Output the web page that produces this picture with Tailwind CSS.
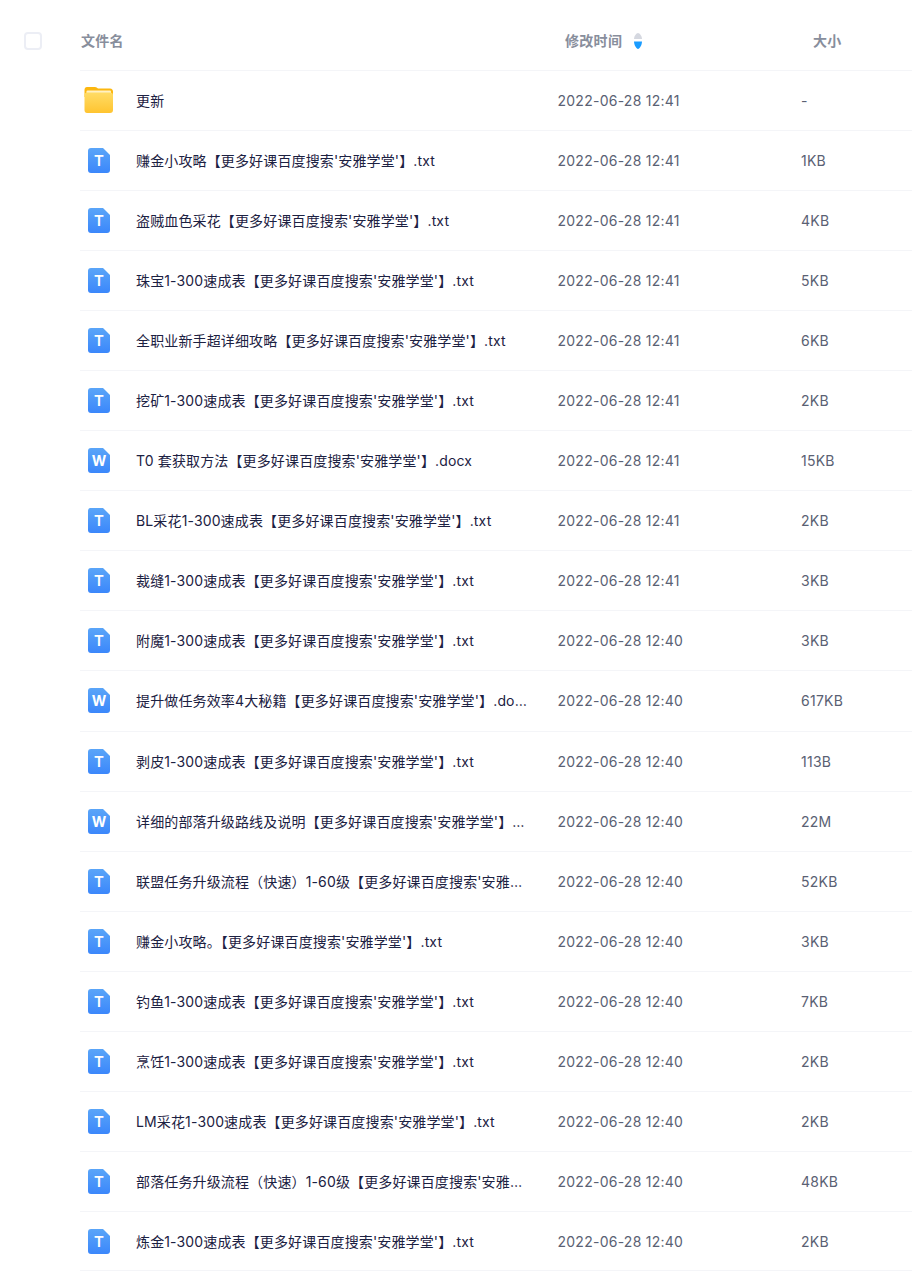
<!DOCTYPE html>
<html lang="zh">
  <head>
    <meta charset="UTF-8" />
    <title>文件列表</title>
    <script src="https://cdn.jsdelivr.net/npm/@tailwindcss/browser@4"></script>
  </head>
  <body class="bg-white font-['Inter','Noto_Sans_CJK_SC',sans-serif] text-[14px] text-[#1c2142] overflow-hidden">
    <!-- Header -->
    <div class="flex items-center h-[69.5px] pt-3">
      <div class="w-[18px] h-[18px] ml-6 border-2 border-[#eceef5] rounded-[4px]"></div>
      <div class="ml-[39px] w-[484px] font-semibold tracking-[0.3px] text-[#888e9c]">文件名</div>
      <div class="w-[248px] flex items-center font-semibold tracking-[0.3px] text-[#888e9c]">
        修改时间
        <svg class="ml-[11px]" width="10" height="18" viewBox="0 0 10 18">
          <path d="M5 1 C6.500 1 9 4 9 7 L1 7 C1 4 3.500 1 5 1Z" fill="#d5d8e0" />
          <path d="M5 17 C6.500 17 9 13 9 9.500 L1 9.500 C1 13 3.500 17 5 17Z" fill="#1a9cff" />
        </svg>
      </div>
      <div class="font-semibold tracking-[0.3px] text-[#888e9c]">大小</div>
    </div>

    <!-- File list -->
    <div class="ml-20 mr-[3px]">
      <div class="flex items-center h-[60.1px] border-t border-[#f4f5f8]">
        <div class="w-14 pl-1 shrink-0">
          <svg width="30" height="26" viewBox="0 0 30 26">
            <defs>
              <linearGradient id="body" x1="0" y1="0" x2="0" y2="1"><stop offset="0" stop-color="#ffdc66" /><stop offset="1" stop-color="#ffc430" /></linearGradient>
              <linearGradient id="doc" x1="0" y1="0" x2="0" y2="1"><stop offset="0" stop-color="#5aa5f8" /><stop offset="1" stop-color="#3b87fb" /></linearGradient>
            </defs>
            <path d="M3 0 H11 C12.500 0 13 1 14 1.500 H26 C28 1.500 29 3 29 4.500 V10 H0.500 V3 C0.500 1 1.500 0 3 0Z" fill="#fcb70f" />
            <rect x="2.500" y="3.500" width="24.500" height="4" rx="1" fill="#fff1c4" />
            <path d="M3 5.500 H26 C28 5.500 29 6.500 29 8 V23 C29 25 28 26 26 26 H3 C1.500 26 0.500 25 0.500 23 V8 C0.500 6.500 1.500 5.500 3 5.500Z" fill="url(#body)" />
          </svg>
        </div>
        <div class="w-[421.500px] pr-[30px] truncate tracking-[0.14px]">更新</div>
        <div class="w-[243.500px] tracking-[0.25px] text-[#5a6173]">2022-06-28 12:41</div>
        <div class="tracking-[0.25px] text-[#5a6173]">-</div>
      </div>

      <div class="flex items-center h-[60.1px] border-t border-[#f4f5f8]">
        <div class="w-14 pl-2 shrink-0"><svg width="22" height="25" viewBox="0 0 22 25"><path d="M3 0 H15 L22 7 V22 C22 24 21 25 19 25 H3 C1 25 0 24 0 22 V3 C0 1 1 0 3 0Z" fill="url(#doc)" /><text x="11" y="18" text-anchor="middle" font-size="15" font-weight="600" fill="#fff">T</text></svg></div>
        <div class="w-[421.500px] pr-[30px] truncate tracking-[0.14px]">赚金小攻略【更多好课百度搜索'安雅学堂'】.txt</div>
        <div class="w-[243.500px] tracking-[0.25px] text-[#5a6173]">2022-06-28 12:41</div>
        <div class="tracking-[0.25px] text-[#5a6173]">1KB</div>
      </div>
      <div class="flex items-center h-[60.1px] border-t border-[#f4f5f8]">
        <div class="w-14 pl-2 shrink-0"><svg width="22" height="25" viewBox="0 0 22 25"><path d="M3 0 H15 L22 7 V22 C22 24 21 25 19 25 H3 C1 25 0 24 0 22 V3 C0 1 1 0 3 0Z" fill="url(#doc)" /><text x="11" y="18" text-anchor="middle" font-size="15" font-weight="600" fill="#fff">T</text></svg></div>
        <div class="w-[421.500px] pr-[30px] truncate tracking-[0.14px]">盗贼血色采花【更多好课百度搜索'安雅学堂'】.txt</div>
        <div class="w-[243.500px] tracking-[0.25px] text-[#5a6173]">2022-06-28 12:41</div>
        <div class="tracking-[0.25px] text-[#5a6173]">4KB</div>
      </div>
      <div class="flex items-center h-[60.1px] border-t border-[#f4f5f8]">
        <div class="w-14 pl-2 shrink-0"><svg width="22" height="25" viewBox="0 0 22 25"><path d="M3 0 H15 L22 7 V22 C22 24 21 25 19 25 H3 C1 25 0 24 0 22 V3 C0 1 1 0 3 0Z" fill="url(#doc)" /><text x="11" y="18" text-anchor="middle" font-size="15" font-weight="600" fill="#fff">T</text></svg></div>
        <div class="w-[421.500px] pr-[30px] truncate tracking-[0.14px]">珠宝1-300速成表【更多好课百度搜索'安雅学堂'】.txt</div>
        <div class="w-[243.500px] tracking-[0.25px] text-[#5a6173]">2022-06-28 12:41</div>
        <div class="tracking-[0.25px] text-[#5a6173]">5KB</div>
      </div>
      <div class="flex items-center h-[60.1px] border-t border-[#f4f5f8]">
        <div class="w-14 pl-2 shrink-0"><svg width="22" height="25" viewBox="0 0 22 25"><path d="M3 0 H15 L22 7 V22 C22 24 21 25 19 25 H3 C1 25 0 24 0 22 V3 C0 1 1 0 3 0Z" fill="url(#doc)" /><text x="11" y="18" text-anchor="middle" font-size="15" font-weight="600" fill="#fff">T</text></svg></div>
        <div class="w-[421.500px] pr-[30px] truncate tracking-[0.14px]">全职业新手超详细攻略【更多好课百度搜索'安雅学堂'】.txt</div>
        <div class="w-[243.500px] tracking-[0.25px] text-[#5a6173]">2022-06-28 12:41</div>
        <div class="tracking-[0.25px] text-[#5a6173]">6KB</div>
      </div>
      <div class="flex items-center h-[60.1px] border-t border-[#f4f5f8]">
        <div class="w-14 pl-2 shrink-0"><svg width="22" height="25" viewBox="0 0 22 25"><path d="M3 0 H15 L22 7 V22 C22 24 21 25 19 25 H3 C1 25 0 24 0 22 V3 C0 1 1 0 3 0Z" fill="url(#doc)" /><text x="11" y="18" text-anchor="middle" font-size="15" font-weight="600" fill="#fff">T</text></svg></div>
        <div class="w-[421.500px] pr-[30px] truncate tracking-[0.14px]">挖矿1-300速成表【更多好课百度搜索'安雅学堂'】.txt</div>
        <div class="w-[243.500px] tracking-[0.25px] text-[#5a6173]">2022-06-28 12:41</div>
        <div class="tracking-[0.25px] text-[#5a6173]">2KB</div>
      </div>
      <div class="flex items-center h-[60.1px] border-t border-[#f4f5f8]">
        <div class="w-14 pl-2 shrink-0"><svg width="22" height="25" viewBox="0 0 22 25"><path d="M3 0 H15 L22 7 V22 C22 24 21 25 19 25 H3 C1 25 0 24 0 22 V3 C0 1 1 0 3 0Z" fill="url(#doc)" /><text x="11" y="18" text-anchor="middle" font-size="14" font-weight="700" fill="#fff">W</text></svg></div>
        <div class="w-[421.500px] pr-[30px] truncate tracking-[0.14px]">T0 套获取方法【更多好课百度搜索'安雅学堂'】.docx</div>
        <div class="w-[243.500px] tracking-[0.25px] text-[#5a6173]">2022-06-28 12:41</div>
        <div class="tracking-[0.25px] text-[#5a6173]">15KB</div>
      </div>
      <div class="flex items-center h-[60.1px] border-t border-[#f4f5f8]">
        <div class="w-14 pl-2 shrink-0"><svg width="22" height="25" viewBox="0 0 22 25"><path d="M3 0 H15 L22 7 V22 C22 24 21 25 19 25 H3 C1 25 0 24 0 22 V3 C0 1 1 0 3 0Z" fill="url(#doc)" /><text x="11" y="18" text-anchor="middle" font-size="15" font-weight="600" fill="#fff">T</text></svg></div>
        <div class="w-[421.500px] pr-[30px] truncate tracking-[0.14px]">BL采花1-300速成表【更多好课百度搜索'安雅学堂'】.txt</div>
        <div class="w-[243.500px] tracking-[0.25px] text-[#5a6173]">2022-06-28 12:41</div>
        <div class="tracking-[0.25px] text-[#5a6173]">2KB</div>
      </div>
      <div class="flex items-center h-[60.1px] border-t border-[#f4f5f8]">
        <div class="w-14 pl-2 shrink-0"><svg width="22" height="25" viewBox="0 0 22 25"><path d="M3 0 H15 L22 7 V22 C22 24 21 25 19 25 H3 C1 25 0 24 0 22 V3 C0 1 1 0 3 0Z" fill="url(#doc)" /><text x="11" y="18" text-anchor="middle" font-size="15" font-weight="600" fill="#fff">T</text></svg></div>
        <div class="w-[421.500px] pr-[30px] truncate tracking-[0.14px]">裁缝1-300速成表【更多好课百度搜索'安雅学堂'】.txt</div>
        <div class="w-[243.500px] tracking-[0.25px] text-[#5a6173]">2022-06-28 12:41</div>
        <div class="tracking-[0.25px] text-[#5a6173]">3KB</div>
      </div>
      <div class="flex items-center h-[60.1px] border-t border-[#f4f5f8]">
        <div class="w-14 pl-2 shrink-0"><svg width="22" height="25" viewBox="0 0 22 25"><path d="M3 0 H15 L22 7 V22 C22 24 21 25 19 25 H3 C1 25 0 24 0 22 V3 C0 1 1 0 3 0Z" fill="url(#doc)" /><text x="11" y="18" text-anchor="middle" font-size="15" font-weight="600" fill="#fff">T</text></svg></div>
        <div class="w-[421.500px] pr-[30px] truncate tracking-[0.14px]">附魔1-300速成表【更多好课百度搜索'安雅学堂'】.txt</div>
        <div class="w-[243.500px] tracking-[0.25px] text-[#5a6173]">2022-06-28 12:40</div>
        <div class="tracking-[0.25px] text-[#5a6173]">3KB</div>
      </div>
      <div class="flex items-center h-[60.1px] border-t border-[#f4f5f8]">
        <div class="w-14 pl-2 shrink-0"><svg width="22" height="25" viewBox="0 0 22 25"><path d="M3 0 H15 L22 7 V22 C22 24 21 25 19 25 H3 C1 25 0 24 0 22 V3 C0 1 1 0 3 0Z" fill="url(#doc)" /><text x="11" y="18" text-anchor="middle" font-size="14" font-weight="700" fill="#fff">W</text></svg></div>
        <div class="w-[421.500px] pr-[30px] truncate tracking-[0.14px]">提升做任务效率4大秘籍【更多好课百度搜索'安雅学堂'】.docx</div>
        <div class="w-[243.500px] tracking-[0.25px] text-[#5a6173]">2022-06-28 12:40</div>
        <div class="tracking-[0.25px] text-[#5a6173]">617KB</div>
      </div>
      <div class="flex items-center h-[60.1px] border-t border-[#f4f5f8]">
        <div class="w-14 pl-2 shrink-0"><svg width="22" height="25" viewBox="0 0 22 25"><path d="M3 0 H15 L22 7 V22 C22 24 21 25 19 25 H3 C1 25 0 24 0 22 V3 C0 1 1 0 3 0Z" fill="url(#doc)" /><text x="11" y="18" text-anchor="middle" font-size="15" font-weight="600" fill="#fff">T</text></svg></div>
        <div class="w-[421.500px] pr-[30px] truncate tracking-[0.14px]">剥皮1-300速成表【更多好课百度搜索'安雅学堂'】.txt</div>
        <div class="w-[243.500px] tracking-[0.25px] text-[#5a6173]">2022-06-28 12:40</div>
        <div class="tracking-[0.25px] text-[#5a6173]">113B</div>
      </div>
      <div class="flex items-center h-[60.1px] border-t border-[#f4f5f8]">
        <div class="w-14 pl-2 shrink-0"><svg width="22" height="25" viewBox="0 0 22 25"><path d="M3 0 H15 L22 7 V22 C22 24 21 25 19 25 H3 C1 25 0 24 0 22 V3 C0 1 1 0 3 0Z" fill="url(#doc)" /><text x="11" y="18" text-anchor="middle" font-size="14" font-weight="700" fill="#fff">W</text></svg></div>
        <div class="w-[421.500px] pr-[30px] truncate tracking-[0.14px]">详细的部落升级路线及说明【更多好课百度搜索'安雅学堂'】.docx</div>
        <div class="w-[243.500px] tracking-[0.25px] text-[#5a6173]">2022-06-28 12:40</div>
        <div class="tracking-[0.25px] text-[#5a6173]">22M</div>
      </div>
      <div class="flex items-center h-[60.1px] border-t border-[#f4f5f8]">
        <div class="w-14 pl-2 shrink-0"><svg width="22" height="25" viewBox="0 0 22 25"><path d="M3 0 H15 L22 7 V22 C22 24 21 25 19 25 H3 C1 25 0 24 0 22 V3 C0 1 1 0 3 0Z" fill="url(#doc)" /><text x="11" y="18" text-anchor="middle" font-size="15" font-weight="600" fill="#fff">T</text></svg></div>
        <div class="w-[421.500px] pr-[30px] truncate tracking-[0.14px]">联盟任务升级流程（快速）1-60级【更多好课百度搜索'安雅学堂'】.txt</div>
        <div class="w-[243.500px] tracking-[0.25px] text-[#5a6173]">2022-06-28 12:40</div>
        <div class="tracking-[0.25px] text-[#5a6173]">52KB</div>
      </div>
      <div class="flex items-center h-[60.1px] border-t border-[#f4f5f8]">
        <div class="w-14 pl-2 shrink-0"><svg width="22" height="25" viewBox="0 0 22 25"><path d="M3 0 H15 L22 7 V22 C22 24 21 25 19 25 H3 C1 25 0 24 0 22 V3 C0 1 1 0 3 0Z" fill="url(#doc)" /><text x="11" y="18" text-anchor="middle" font-size="15" font-weight="600" fill="#fff">T</text></svg></div>
        <div class="w-[421.500px] pr-[30px] truncate tracking-[0.14px]">赚金小攻略。【更多好课百度搜索'安雅学堂'】.txt</div>
        <div class="w-[243.500px] tracking-[0.25px] text-[#5a6173]">2022-06-28 12:40</div>
        <div class="tracking-[0.25px] text-[#5a6173]">3KB</div>
      </div>
      <div class="flex items-center h-[60.1px] border-t border-[#f4f5f8]">
        <div class="w-14 pl-2 shrink-0"><svg width="22" height="25" viewBox="0 0 22 25"><path d="M3 0 H15 L22 7 V22 C22 24 21 25 19 25 H3 C1 25 0 24 0 22 V3 C0 1 1 0 3 0Z" fill="url(#doc)" /><text x="11" y="18" text-anchor="middle" font-size="15" font-weight="600" fill="#fff">T</text></svg></div>
        <div class="w-[421.500px] pr-[30px] truncate tracking-[0.14px]">钓鱼1-300速成表【更多好课百度搜索'安雅学堂'】.txt</div>
        <div class="w-[243.500px] tracking-[0.25px] text-[#5a6173]">2022-06-28 12:40</div>
        <div class="tracking-[0.25px] text-[#5a6173]">7KB</div>
      </div>
      <div class="flex items-center h-[60.1px] border-t border-[#f4f5f8]">
        <div class="w-14 pl-2 shrink-0"><svg width="22" height="25" viewBox="0 0 22 25"><path d="M3 0 H15 L22 7 V22 C22 24 21 25 19 25 H3 C1 25 0 24 0 22 V3 C0 1 1 0 3 0Z" fill="url(#doc)" /><text x="11" y="18" text-anchor="middle" font-size="15" font-weight="600" fill="#fff">T</text></svg></div>
        <div class="w-[421.500px] pr-[30px] truncate tracking-[0.14px]">烹饪1-300速成表【更多好课百度搜索'安雅学堂'】.txt</div>
        <div class="w-[243.500px] tracking-[0.25px] text-[#5a6173]">2022-06-28 12:40</div>
        <div class="tracking-[0.25px] text-[#5a6173]">2KB</div>
      </div>
      <div class="flex items-center h-[60.1px] border-t border-[#f4f5f8]">
        <div class="w-14 pl-2 shrink-0"><svg width="22" height="25" viewBox="0 0 22 25"><path d="M3 0 H15 L22 7 V22 C22 24 21 25 19 25 H3 C1 25 0 24 0 22 V3 C0 1 1 0 3 0Z" fill="url(#doc)" /><text x="11" y="18" text-anchor="middle" font-size="15" font-weight="600" fill="#fff">T</text></svg></div>
        <div class="w-[421.500px] pr-[30px] truncate tracking-[0.14px]">LM采花1-300速成表【更多好课百度搜索'安雅学堂'】.txt</div>
        <div class="w-[243.500px] tracking-[0.25px] text-[#5a6173]">2022-06-28 12:40</div>
        <div class="tracking-[0.25px] text-[#5a6173]">2KB</div>
      </div>
      <div class="flex items-center h-[60.1px] border-t border-[#f4f5f8]">
        <div class="w-14 pl-2 shrink-0"><svg width="22" height="25" viewBox="0 0 22 25"><path d="M3 0 H15 L22 7 V22 C22 24 21 25 19 25 H3 C1 25 0 24 0 22 V3 C0 1 1 0 3 0Z" fill="url(#doc)" /><text x="11" y="18" text-anchor="middle" font-size="15" font-weight="600" fill="#fff">T</text></svg></div>
        <div class="w-[421.500px] pr-[30px] truncate tracking-[0.14px]">部落任务升级流程（快速）1-60级【更多好课百度搜索'安雅学堂'】.txt</div>
        <div class="w-[243.500px] tracking-[0.25px] text-[#5a6173]">2022-06-28 12:40</div>
        <div class="tracking-[0.25px] text-[#5a6173]">48KB</div>
      </div>
      <div class="flex items-center h-[60.1px] border-y border-[#f4f5f8]">
        <div class="w-14 pl-2 shrink-0"><svg width="22" height="25" viewBox="0 0 22 25"><path d="M3 0 H15 L22 7 V22 C22 24 21 25 19 25 H3 C1 25 0 24 0 22 V3 C0 1 1 0 3 0Z" fill="url(#doc)" /><text x="11" y="18" text-anchor="middle" font-size="15" font-weight="600" fill="#fff">T</text></svg></div>
        <div class="w-[421.500px] pr-[30px] truncate tracking-[0.14px]">炼金1-300速成表【更多好课百度搜索'安雅学堂'】.txt</div>
        <div class="w-[243.500px] tracking-[0.25px] text-[#5a6173]">2022-06-28 12:40</div>
        <div class="tracking-[0.25px] text-[#5a6173]">2KB</div>
      </div>
    </div>
  </body>
</html>
